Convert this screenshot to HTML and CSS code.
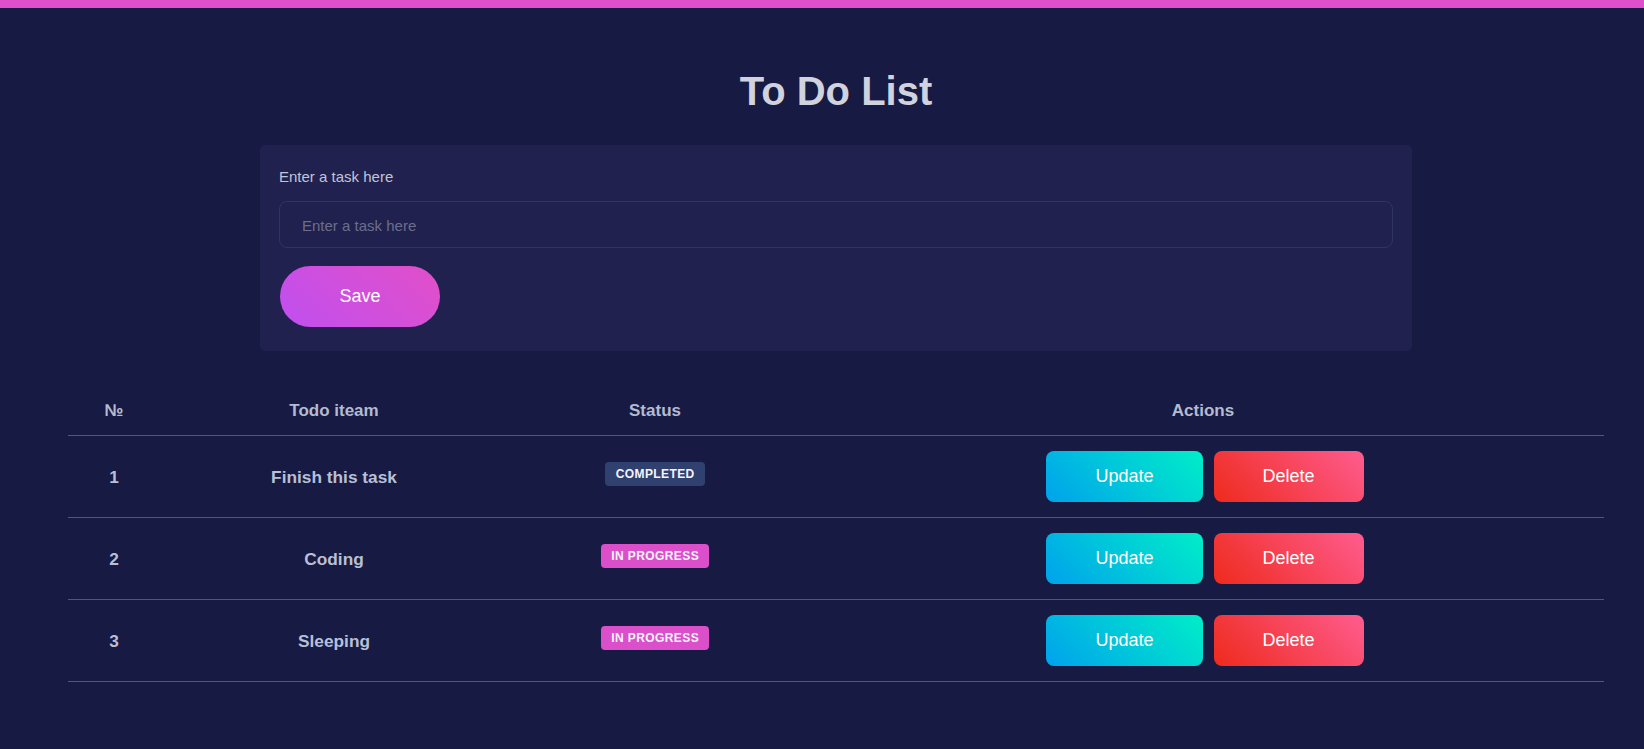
FILE: index.html
```html
<!DOCTYPE html>
<html lang="en">
<head>
<meta charset="utf-8">
<title>To Do List</title>
<link rel="stylesheet" href="styles.css">
</head>
<body>
<div class="topbar"></div>
<main class="container">
  <h1 class="title">To Do List</h1>
  <form class="card">
    <label class="label" for="task">Enter a task here</label>
    <input class="input" id="task" type="text" placeholder="Enter a task here">
    <button class="save" type="button">Save</button>
  </form>
  <table class="todos">
    <thead>
      <tr>
        <th class="col-no">№</th>
        <th class="col-item">Todo iteam</th>
        <th class="col-status">Status</th>
        <th class="col-actions">Actions</th>
      </tr>
    </thead>
    <tbody>
      <tr>
        <td>1</td>
        <td>Finish this task</td>
        <td><span class="badge badge-done">COMPLETED</span></td>
        <td><div class="actions"><button class="btn btn-update" type="button">Update</button><button class="btn btn-delete" type="button">Delete</button></div></td>
      </tr>
      <tr>
        <td>2</td>
        <td>Coding</td>
        <td><span class="badge badge-progress">IN PROGRESS</span></td>
        <td><div class="actions"><button class="btn btn-update" type="button">Update</button><button class="btn btn-delete" type="button">Delete</button></div></td>
      </tr>
      <tr>
        <td>3</td>
        <td>Sleeping</td>
        <td><span class="badge badge-progress">IN PROGRESS</span></td>
        <td><div class="actions"><button class="btn btn-update" type="button">Update</button><button class="btn btn-delete" type="button">Delete</button></div></td>
      </tr>
    </tbody>
  </table>
</main>
</body>
</html>
```
FILE: styles.css
```css
* { box-sizing: border-box; }
html, body { margin: 0; padding: 0; }
body {
  background: #171a42;
  font-family: "Liberation Sans", Arial, sans-serif;
  color: #b8bfd6;
  min-height: 749px;
}
.topbar {
  height: 8px;
  background: #de4fcb;
}
.container {
  padding: 0 40px 0 68px;
}
.title {
  margin: 60px 0 31px;
  font-size: 40px;
  line-height: 46px;
  font-weight: bold;
  text-align: center;
  color: #d0d2de;
}
.card {
  width: 75%;
  margin: 0 auto;
  background: #20214f;
  border-radius: 5px;
  padding: 23px 19px 24px;
  display: flex;
  flex-direction: column;
  align-items: flex-start;
}
.label {
  font-size: 15px;
  line-height: 17px;
  color: #c0c4d8;
}
.input {
  margin-top: 16px;
  width: 100%;
  height: 47px;
  background: transparent;
  border: 1px solid #2f3461;
  border-radius: 8px;
  padding: 1px 22px 0;
  font-family: inherit;
  font-size: 15px;
  color: #c0c4d8;
  outline: none;
}
.input::placeholder { color: #6c6e8c; }
.save {
  margin: 18px 0 0 1px;
  width: 160px;
  height: 61px;
  border: none;
  border-radius: 31px;
  background: linear-gradient(45deg, #c04ff0 0%, #e24fc8 100%);
  color: #ffffff;
  font-family: inherit;
  font-size: 18px;
  cursor: pointer;
}
.todos {
  width: 100%;
  margin-top: 36px;
  border-collapse: collapse;
}
.todos th {
  padding: 14px 0;
  line-height: 20px;
  font-size: 17px;
  font-weight: bold;
  color: #b4bad0;
  text-align: center;
  border-bottom: 1px solid #4f5683;
}
.col-no { width: 92px; }
.col-item { width: 348px; }
.col-status { width: 294px; }
.todos td {
  padding: 15px 0;
  font-size: 17.3px;
  font-weight: bold;
  line-height: 20px;
  text-align: center;
  vertical-align: middle;
  color: #b8bfd6;
  border-bottom: 1px solid #4f5683;
}
.badge {
  display: inline-block;
  position: relative;
  top: -3px;
  padding: 0 10px 0 10.4px;
  height: 24px;
  line-height: 24px;
  border-radius: 4px;
  font-size: 12px;
  font-weight: bold;
  letter-spacing: 0.4px;
  color: #f4f4ff;
}
.badge-done { background: #30406f; }
.badge-progress { background: #dc4fcb; }
.actions {
  display: flex;
  justify-content: center;
  gap: 11px;
  padding-left: 4px;
}
.btn {
  height: 51px;
  padding: 0 49px;
  border: none;
  border-radius: 8px;
  color: #ffffff;
  font-family: inherit;
  font-size: 18px;
  cursor: pointer;
}
.btn-update { background: linear-gradient(45deg, #00a2ec 0%, #00eec8 100%); }
.btn-delete { background: linear-gradient(45deg, #ee2a1c 0%, #ff5c8f 100%); }
```
